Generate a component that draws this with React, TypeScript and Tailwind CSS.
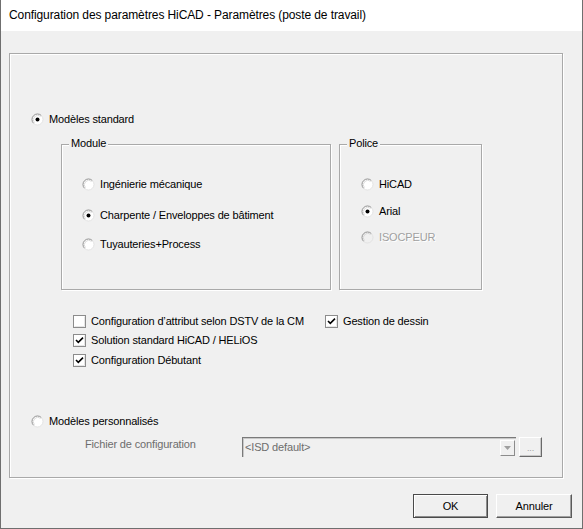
import type { ReactNode } from "react";

const FACE = "bg-[#f0f0f0]";

function Radio({ checked, disabled }: { checked?: boolean; disabled?: boolean }) {
  return (
    <svg width="13" height="13" viewBox="0 0 13 13" className="shrink-0">
      <circle cx="6.5" cy="6.5" r="5.5" fill={disabled ? "#f0f0f0" : "#fff"} />
      <path d="M2.61 10.39 A5.5 5.5 0 0 1 10.39 2.61" fill="none" stroke="#8f8f8f" strokeWidth="1" />
      <path d="M10.39 2.61 A5.5 5.5 0 0 1 2.61 10.39" fill="none" stroke="#e3e3e3" strokeWidth="1" />
      <path d="M3.4 9.6 A4.4 4.4 0 0 1 9.6 3.4" fill="none" stroke="#d0d0d0" strokeWidth="0.8" />
      {checked && <circle cx="6.5" cy="6.5" r="2" fill="#000" />}
    </svg>
  );
}

function Check({ checked }: { checked?: boolean }) {
  return (
    <svg width="13" height="13" viewBox="0 0 13 13" className="shrink-0">
      <rect x="0.5" y="0.5" width="12" height="12" fill="#fff" stroke="#8c8c8c" />
      <path d="M1.5 11.5 H11.5 V1.5" fill="none" stroke="#e6e6e6" />
      {checked && (
        <path d="M3 6 L5.3 8.3 L10 3.6" fill="none" stroke="#000" strokeWidth="1.6" />
      )}
    </svg>
  );
}

function Group({ title, className, children }: { title: string; className: string; children: ReactNode }) {
  return (
    <div className={`relative border border-[#a9a9a9] shadow-[inset_1px_1px_0_#fff,1px_1px_0_#fff] ${className}`}>
      <span className={`absolute -top-[8px] left-[7px] px-[2px] ${FACE} leading-[13px]`}>{title}</span>
      {children}
    </div>
  );
}

function Option({ label, checked, disabled, className = "" }: { label: string; checked?: boolean; disabled?: boolean; className?: string }) {
  return (
    <div className={`flex h-[13px] items-center gap-[5px] ${className}`}>
      <Radio checked={checked} disabled={disabled} />
      <span className={disabled ? "text-[#a0a0a0] [text-shadow:1px_1px_0_#fff]" : ""}>{label}</span>
    </div>
  );
}

function CheckRow({ label, checked, className = "" }: { label: string; checked?: boolean; className?: string }) {
  return (
    <div className={`flex h-[13px] items-center gap-[5px] ${className}`}>
      <Check checked={checked} />
      <span className="whitespace-nowrap">{label}</span>
    </div>
  );
}

export default function App() {
  return (
    <div
      className={`flex h-[529px] w-[583px] flex-col border-x border-b border-[#6f6f6f] ${FACE} font-['Liberation_Sans',Arial,sans-serif] text-[11px] leading-[13px] tracking-[-0.15px] text-black`}
    >
      <div className="flex h-[31px] shrink-0 items-center bg-white pl-[8px] text-[12px] tracking-[-0.1px]">
        Configuration des paramètres HiCAD - Paramètres (poste de travail)
      </div>

      <div className="pl-[8px] pt-[22px]">
        <div className="h-[425px] w-[554px] border border-[#a9a9a9] shadow-[inset_1px_1px_0_#fff,1px_1px_0_#fff]">
          <Option label="Modèles standard" checked className="ml-[21px] mt-[59px]" />

          <div className="ml-[51px] mt-[18px] flex gap-[8px]">
            <Group title="Module" className="h-[146px] w-[270px] pl-[20px] pt-[33px]">
              <Option label="Ingénierie mécanique" />
              <Option label="Charpente / Enveloppes de bâtiment" checked className="mt-[18px]" />
              <Option label="Tuyauteries+Process" className="mt-[16px]" />
            </Group>
            <Group title="Police" className="h-[146px] w-[143px] pl-[21px] pt-[33px]">
              <Option label="HiCAD" />
              <Option label="Arial" checked className="mt-[14px]" />
              <Option label="ISOCPEUR" disabled className="mt-[13px]" />
            </Group>
          </div>

          <div className="ml-[63px] mt-[25px]">
            <div className="flex">
              <CheckRow label="Configuration d’attribut selon DSTV de la CM" className="w-[252px]" />
              <CheckRow label="Gestion de dessin" checked />
            </div>
            <CheckRow label="Solution standard HiCAD / HELiOS" checked className="mt-[6px]" />
            <CheckRow label="Configuration Débutant" checked className="mt-[7px]" />
          </div>

          <Option label="Modèles personnalisés" className="ml-[21px] mt-[48px]" />

          <div className="ml-[75px] mt-[9px] flex items-start">
            <span className="w-[157px] pt-[1px] text-[#6d6d6d]">Fichier de configuration</span>
            <div className="flex h-[20px] w-[274px] items-center border-l border-t border-[#7a7a7a] border-b-white border-r-white shadow-[inset_1px_1px_0_#c8c8c8]">
              <span className="flex-1 pl-[2px] text-[#6d6d6d]">&lt;ISD default&gt;</span>
              <div className="mr-[1px] flex h-[16px] w-[15px] items-center justify-center border border-white border-b-[#8c8c8c] border-r-[#8c8c8c]">
                <svg width="7" height="4" viewBox="0 0 7 4">
                  <path d="M0 0 H7 L3.5 4 Z" fill="#a0a0a0" />
                </svg>
              </div>
            </div>
            <div className="ml-[3px] flex h-[20px] w-[23px] items-end justify-center border border-white border-b-[#696969] border-r-[#696969] pb-[3px] text-[9px] leading-[9px] text-[#a0a0a0] shadow-[inset_-1px_-1px_0_#c8c8c8]">
              ...
            </div>
          </div>
        </div>

        <div className="mt-[16px] flex justify-end gap-[8px] pr-[10px]">
          <button className="flex h-[24px] w-[75px] items-center justify-center border border-[#4a4a4a] bg-[#f0f0f0] shadow-[inset_1px_1px_0_#fff,inset_-1px_-1px_0_#8c8c8c]">
            OK
          </button>
          <button className="flex h-[24px] w-[76px] items-center justify-center border border-white border-b-[#5a5a5a] border-r-[#5a5a5a] bg-[#f0f0f0] shadow-[inset_-1px_-1px_0_#a0a0a0]">
            Annuler
          </button>
        </div>
      </div>
    </div>
  );
}
